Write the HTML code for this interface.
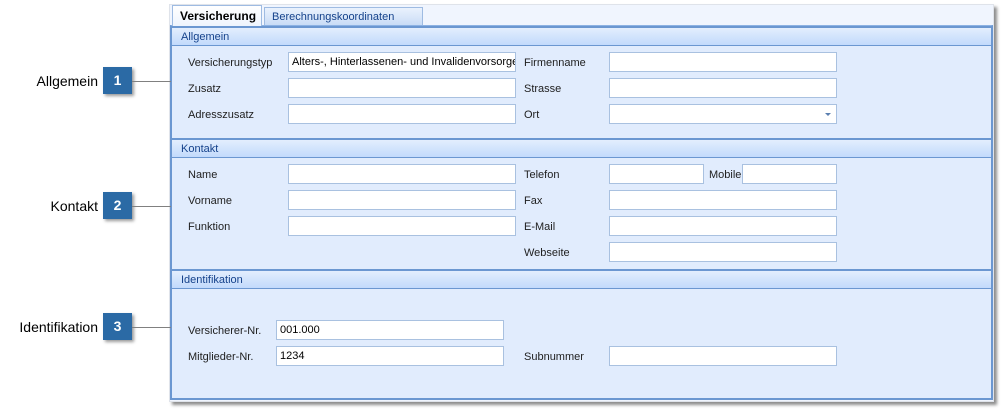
<!DOCTYPE html>
<html><head><meta charset="utf-8"><style>
*{margin:0;padding:0;box-sizing:border-box}
body{width:1008px;height:418px;background:#fff;position:relative;overflow:hidden;font-family:"Liberation Sans","DejaVu Sans",sans-serif;font-size:11px;color:#1e1e1e}
.a{position:absolute}
.outer{left:169px;top:4px;width:825px;height:398px;background:#f0f5fe;border:1px solid #dfe3ea;box-shadow:3px 3px 3px rgba(0,0,0,.45)}
.panel{left:170px;top:25px;width:823px;height:375px;background:#e1ecfd;border:2px solid #6b97d1;border-top:1px solid #8db2e3}
.hdr{left:172px;width:819px;height:20px;background:linear-gradient(#e3eefd,#c2dafc);border-top:2px solid #6b97d1;border-bottom:1px solid #6b97d1;color:#15428b;padding:3px 0 0 9px;font-size:11px}
.lbl{font-size:11px;color:#1e1e1e}
.in{background:#fff;border:1px solid #a9c1e0;height:20px;padding:3px 0 0 3px;font-size:11px;color:#000;overflow:hidden;white-space:nowrap}
.box{left:103px;width:29px;height:27px;background:#2b6aa5;color:#fff;font-weight:bold;font-size:14px;text-align:center;line-height:27px;box-shadow:2px 2px 3px rgba(0,0,0,.4)}
.ln{left:132px;width:39px;height:1px;background:#808080}
.cl{font-size:14px;color:#000;text-align:right;width:98px;left:0}
.tab1{left:172px;top:5px;width:90px;height:21px;background:linear-gradient(#fff,#eef4fd);border:1px solid #9ebbe2;border-bottom:none;font-weight:bold;font-size:12px;padding:3px 0 0 7px;color:#000}
.tab2{left:264px;top:7px;width:159px;height:18px;background:linear-gradient(#eaf2fd,#c9dcf6);border:1px solid #9ebbe2;border-bottom:none;color:#15428b;padding:3px 0 0 7px;font-size:11px}
</style></head><body>
<div class="a outer"></div>
<div class="a tab2">Berechnungskoordinaten</div>
<div class="a panel"></div>
<div class="a tab1">Versicherung</div>

<div class="a hdr" style="top:26px">Allgemein</div>
<div class="a hdr" style="top:138px">Kontakt</div>
<div class="a hdr" style="top:269px">Identifikation</div>

<div class="a lbl" style="left:188px;top:57px">Versicherungstyp</div>
<div class="a in" style="left:288px;top:52px;width:228px">Alters-, Hinterlassenen- und Invalidenvorsorge</div>
<div class="a lbl" style="left:188px;top:83px">Zusatz</div>
<div class="a in" style="left:288px;top:78px;width:228px"></div>
<div class="a lbl" style="left:188px;top:109px">Adresszusatz</div>
<div class="a in" style="left:288px;top:104px;width:228px"></div>
<div class="a lbl" style="left:524px;top:57px">Firmenname</div>
<div class="a in" style="left:609px;top:52px;width:228px"></div>
<div class="a lbl" style="left:524px;top:83px">Strasse</div>
<div class="a in" style="left:609px;top:78px;width:228px"></div>
<div class="a lbl" style="left:524px;top:109px">Ort</div>
<div class="a in" style="left:609px;top:104px;width:228px"></div>
<div class="a" style="left:825px;top:113px;width:0;height:0;border-left:3px solid transparent;border-right:3px solid transparent;border-top:3px solid #5a7fb0"></div>

<div class="a lbl" style="left:188px;top:169px">Name</div>
<div class="a in" style="left:288px;top:164px;width:228px"></div>
<div class="a lbl" style="left:188px;top:195px">Vorname</div>
<div class="a in" style="left:288px;top:190px;width:228px"></div>
<div class="a lbl" style="left:188px;top:221px">Funktion</div>
<div class="a in" style="left:288px;top:216px;width:228px"></div>
<div class="a lbl" style="left:524px;top:169px">Telefon</div>
<div class="a in" style="left:609px;top:164px;width:95px"></div>
<div class="a lbl" style="left:709px;top:169px">Mobile</div>
<div class="a in" style="left:742px;top:164px;width:95px"></div>
<div class="a lbl" style="left:524px;top:195px">Fax</div>
<div class="a in" style="left:609px;top:190px;width:228px"></div>
<div class="a lbl" style="left:524px;top:221px">E-Mail</div>
<div class="a in" style="left:609px;top:216px;width:228px"></div>
<div class="a lbl" style="left:524px;top:247px">Webseite</div>
<div class="a in" style="left:609px;top:242px;width:228px"></div>

<div class="a lbl" style="left:188px;top:325px">Versicherer-Nr.</div>
<div class="a in" style="left:276px;top:320px;width:228px">001.000</div>
<div class="a lbl" style="left:188px;top:351px">Mitglieder-Nr.</div>
<div class="a in" style="left:276px;top:346px;width:228px">1234</div>
<div class="a lbl" style="left:524px;top:351px">Subnummer</div>
<div class="a in" style="left:609px;top:346px;width:228px"></div>

<div class="a cl" style="top:73px">Allgemein</div>
<div class="a box" style="top:67px">1</div>
<div class="a ln" style="top:81px"></div>
<div class="a cl" style="top:198px">Kontakt</div>
<div class="a box" style="top:192px">2</div>
<div class="a ln" style="top:206px"></div>
<div class="a cl" style="top:319px">Identifikation</div>
<div class="a box" style="top:313px">3</div>
<div class="a ln" style="top:327px"></div>
</body></html>
